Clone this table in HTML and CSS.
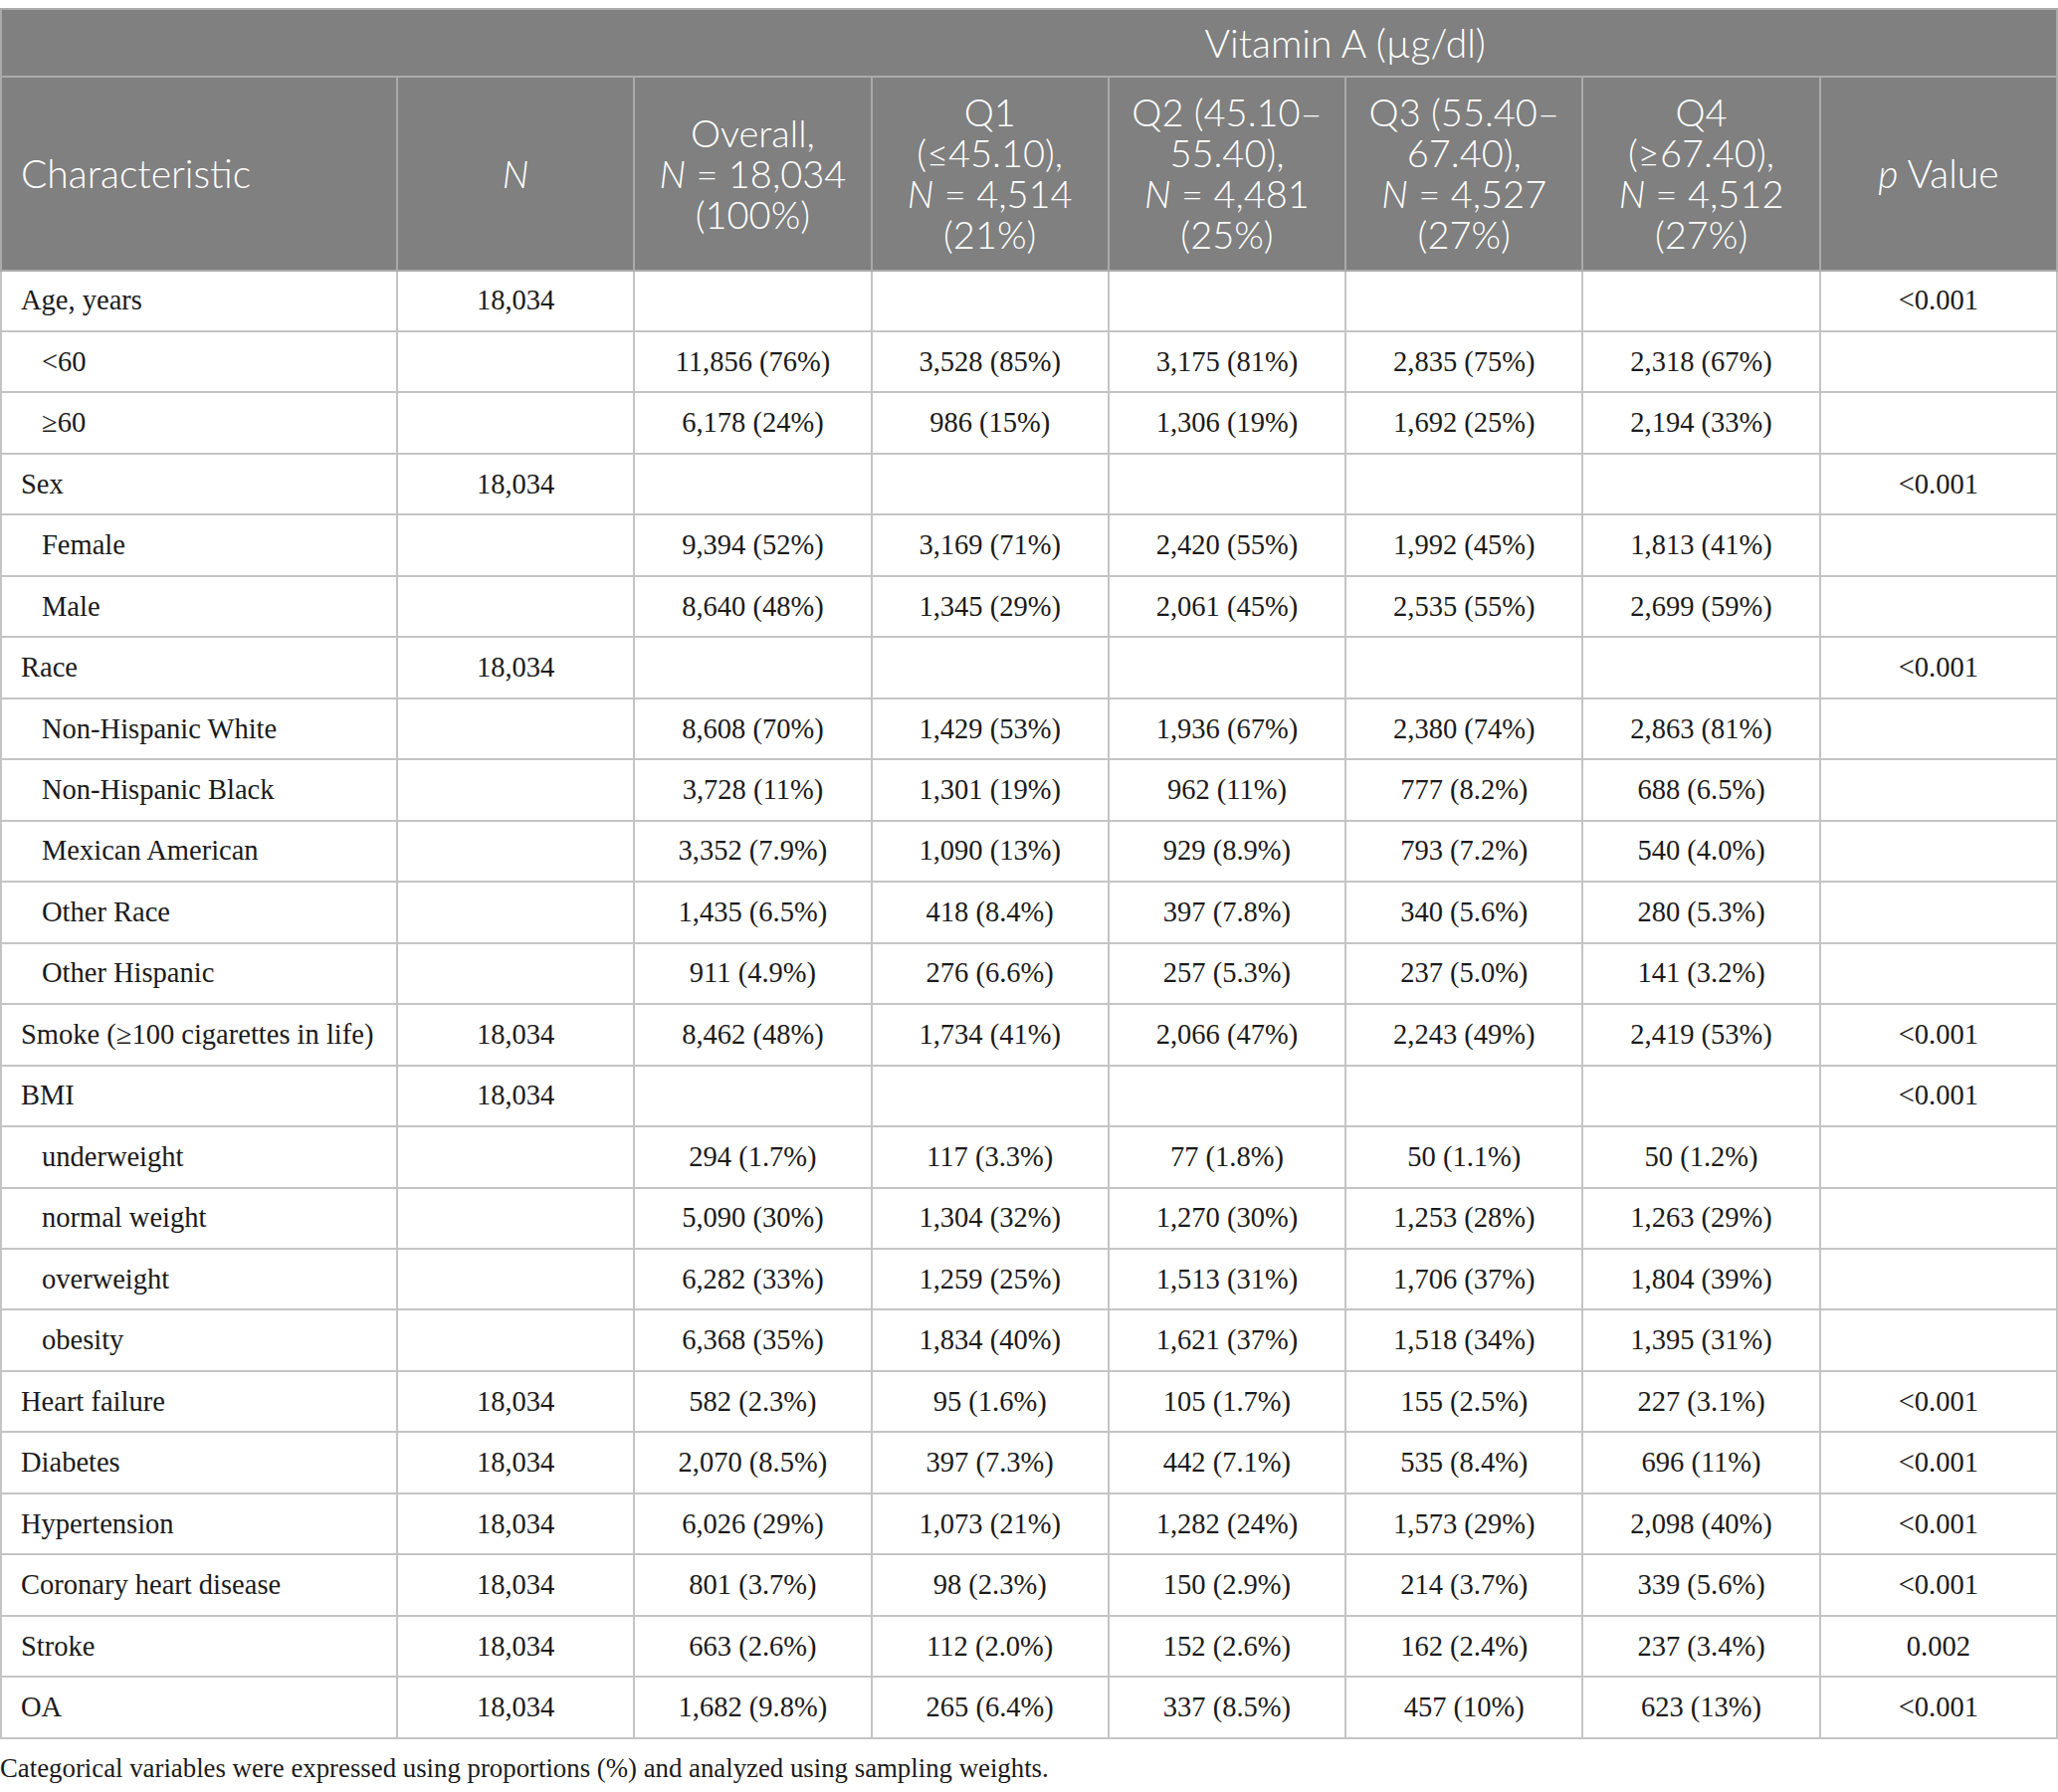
FILE: index.html
```html
<!DOCTYPE html>
<html>
<head>
<meta charset="utf-8">
<link rel="stylesheet" href="styles.css">
</head>
<body>
<table class="tbl">
<colgroup>
<col class="c-first"><col><col><col><col><col><col><col>
</colgroup>
<thead>
<tr class="h1">
<th colspan="2" class="blank"></th>
<th colspan="6" class="span">Vitamin A (µg/dl)</th>
</tr>
<tr class="h2">
<th class="left">Characteristic</th>
<th><i>N</i></th>
<th>Overall,<br><i>N</i> = 18,034<br>(100%)</th>
<th>Q1<br>(≤45.10),<br><i>N</i> = 4,514<br>(21%)</th>
<th>Q2 (45.10–<br>55.40),<br><i>N</i> = 4,481<br>(25%)</th>
<th>Q3 (55.40–<br>67.40),<br><i>N</i> = 4,527<br>(27%)</th>
<th>Q4<br>(≥67.40),<br><i>N</i> = 4,512<br>(27%)</th>
<th><i>p</i> Value</th>
</tr>
</thead>
<tbody>
<tr><td class="left">Age, years</td><td>18,034</td><td></td><td></td><td></td><td></td><td></td><td>&lt;0.001</td></tr>
<tr><td class="left sub">&lt;60</td><td></td><td>11,856 (76%)</td><td>3,528 (85%)</td><td>3,175 (81%)</td><td>2,835 (75%)</td><td>2,318 (67%)</td><td></td></tr>
<tr><td class="left sub">≥60</td><td></td><td>6,178 (24%)</td><td>986 (15%)</td><td>1,306 (19%)</td><td>1,692 (25%)</td><td>2,194 (33%)</td><td></td></tr>
<tr><td class="left">Sex</td><td>18,034</td><td></td><td></td><td></td><td></td><td></td><td>&lt;0.001</td></tr>
<tr><td class="left sub">Female</td><td></td><td>9,394 (52%)</td><td>3,169 (71%)</td><td>2,420 (55%)</td><td>1,992 (45%)</td><td>1,813 (41%)</td><td></td></tr>
<tr><td class="left sub">Male</td><td></td><td>8,640 (48%)</td><td>1,345 (29%)</td><td>2,061 (45%)</td><td>2,535 (55%)</td><td>2,699 (59%)</td><td></td></tr>
<tr><td class="left">Race</td><td>18,034</td><td></td><td></td><td></td><td></td><td></td><td>&lt;0.001</td></tr>
<tr><td class="left sub">Non-Hispanic White</td><td></td><td>8,608 (70%)</td><td>1,429 (53%)</td><td>1,936 (67%)</td><td>2,380 (74%)</td><td>2,863 (81%)</td><td></td></tr>
<tr><td class="left sub">Non-Hispanic Black</td><td></td><td>3,728 (11%)</td><td>1,301 (19%)</td><td>962 (11%)</td><td>777 (8.2%)</td><td>688 (6.5%)</td><td></td></tr>
<tr><td class="left sub">Mexican American</td><td></td><td>3,352 (7.9%)</td><td>1,090 (13%)</td><td>929 (8.9%)</td><td>793 (7.2%)</td><td>540 (4.0%)</td><td></td></tr>
<tr><td class="left sub">Other Race</td><td></td><td>1,435 (6.5%)</td><td>418 (8.4%)</td><td>397 (7.8%)</td><td>340 (5.6%)</td><td>280 (5.3%)</td><td></td></tr>
<tr><td class="left sub">Other Hispanic</td><td></td><td>911 (4.9%)</td><td>276 (6.6%)</td><td>257 (5.3%)</td><td>237 (5.0%)</td><td>141 (3.2%)</td><td></td></tr>
<tr><td class="left">Smoke (≥100 cigarettes in life)</td><td>18,034</td><td>8,462 (48%)</td><td>1,734 (41%)</td><td>2,066 (47%)</td><td>2,243 (49%)</td><td>2,419 (53%)</td><td>&lt;0.001</td></tr>
<tr><td class="left">BMI</td><td>18,034</td><td></td><td></td><td></td><td></td><td></td><td>&lt;0.001</td></tr>
<tr><td class="left sub">underweight</td><td></td><td>294 (1.7%)</td><td>117 (3.3%)</td><td>77 (1.8%)</td><td>50 (1.1%)</td><td>50 (1.2%)</td><td></td></tr>
<tr><td class="left sub">normal weight</td><td></td><td>5,090 (30%)</td><td>1,304 (32%)</td><td>1,270 (30%)</td><td>1,253 (28%)</td><td>1,263 (29%)</td><td></td></tr>
<tr><td class="left sub">overweight</td><td></td><td>6,282 (33%)</td><td>1,259 (25%)</td><td>1,513 (31%)</td><td>1,706 (37%)</td><td>1,804 (39%)</td><td></td></tr>
<tr><td class="left sub">obesity</td><td></td><td>6,368 (35%)</td><td>1,834 (40%)</td><td>1,621 (37%)</td><td>1,518 (34%)</td><td>1,395 (31%)</td><td></td></tr>
<tr><td class="left">Heart failure</td><td>18,034</td><td>582 (2.3%)</td><td>95 (1.6%)</td><td>105 (1.7%)</td><td>155 (2.5%)</td><td>227 (3.1%)</td><td>&lt;0.001</td></tr>
<tr><td class="left">Diabetes</td><td>18,034</td><td>2,070 (8.5%)</td><td>397 (7.3%)</td><td>442 (7.1%)</td><td>535 (8.4%)</td><td>696 (11%)</td><td>&lt;0.001</td></tr>
<tr><td class="left">Hypertension</td><td>18,034</td><td>6,026 (29%)</td><td>1,073 (21%)</td><td>1,282 (24%)</td><td>1,573 (29%)</td><td>2,098 (40%)</td><td>&lt;0.001</td></tr>
<tr><td class="left">Coronary heart disease</td><td>18,034</td><td>801 (3.7%)</td><td>98 (2.3%)</td><td>150 (2.9%)</td><td>214 (3.7%)</td><td>339 (5.6%)</td><td>&lt;0.001</td></tr>
<tr><td class="left">Stroke</td><td>18,034</td><td>663 (2.6%)</td><td>112 (2.0%)</td><td>152 (2.6%)</td><td>162 (2.4%)</td><td>237 (3.4%)</td><td>0.002</td></tr>
<tr><td class="left">OA</td><td>18,034</td><td>1,682 (9.8%)</td><td>265 (6.4%)</td><td>337 (8.5%)</td><td>457 (10%)</td><td>623 (13%)</td><td>&lt;0.001</td></tr>
</tbody>
</table>
<p class="note">Categorical variables were expressed using proportions (%) and analyzed using sampling weights.</p>
</body>
</html>
```
FILE: styles.css
```css
html, body {
  margin: 0;
  padding: 0;
  background: #ffffff;
}
body {
  padding-top: 8px;
  font-family: "Liberation Serif", "Times New Roman", serif;
  color: #1a1a1a;
}
.tbl {
  width: 2068px;
  table-layout: fixed;
  border-collapse: collapse;
}
.c-first {
  width: 398px;
}
.tbl th {
  background: #7f807f;
  color: #ffffff;
  font-family: "Lato", "Open Sans", sans-serif;
  font-weight: 300;
  font-size: 38px;
  line-height: 41px;
  text-align: center;
  vertical-align: middle;
  border: 2px solid #a9aaa9;
  padding: 0 6px;
  white-space: nowrap;
}
.tbl th i {
  font-style: italic;
}
.tbl .h1 th {
  height: 66px;
}
.tbl .h1 .blank {
  border-right: none;
}
.tbl .h1 .span {
  border-left: none;
}
.tbl .h2 th {
  height: 192.5px;
}
.tbl th.left {
  text-align: left;
  padding-left: 19px;
}
.tbl th.left,
.tbl .h1 .span,
.tbl .h2 th:last-child {
  font-size: 39px;
}
.tbl td {
  height: 59.47px;
  border: 2px solid #c4c4c4;
  font-size: 28.5px;
  text-align: center;
  vertical-align: middle;
  padding: 0 6px;
  white-space: nowrap;
}
.tbl td.left {
  text-align: left;
  padding-left: 19px;
}
.tbl td.sub {
  padding-left: 40px;
}
.note {
  margin: 14px 0 0 0;
  font-family: "Liberation Serif", "Times New Roman", serif;
  font-size: 26.8px;
  color: #1a1a1a;
}
```
